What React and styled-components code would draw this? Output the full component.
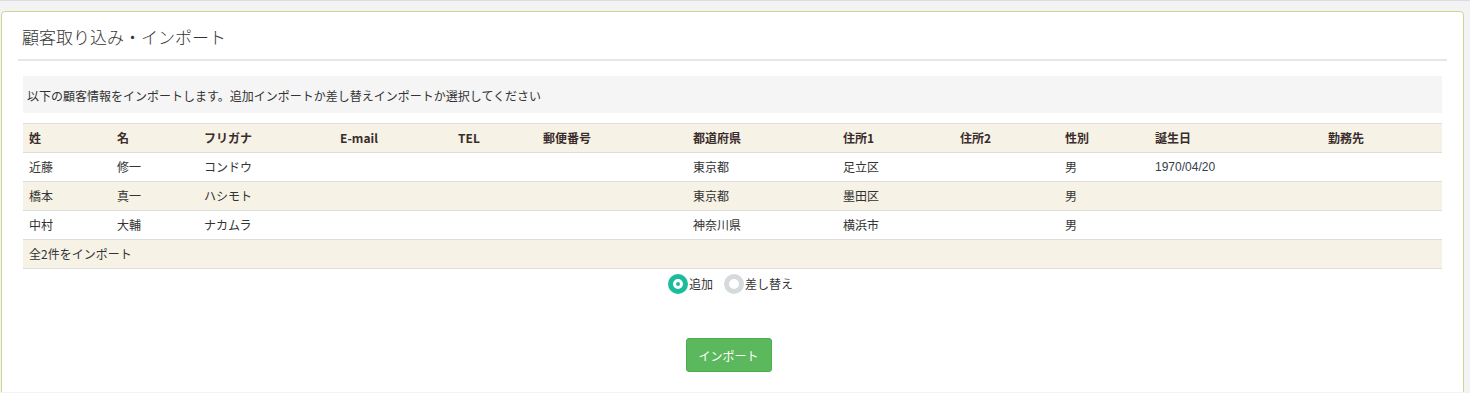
import styled, { createGlobalStyle } from "styled-components";

const GlobalStyle = createGlobalStyle`
    html, body {
        margin: 0;
        padding: 0;
        background: #f3f3f3;
    }
    body {
        font-family: "Noto Sans CJK JP", "Liberation Sans", sans-serif;
        font-size: 12px;
        color: #333;
    }
`;

const columns = [
    { key: "sei", label: "姓", width: 88 },
    { key: "mei", label: "名", width: 87 },
    { key: "kana", label: "フリガナ", width: 136 },
    { key: "mail", label: "E-mail", width: 118 },
    { key: "tel", label: "TEL", width: 85 },
    { key: "zip", label: "郵便番号", width: 150 },
    { key: "pref", label: "都道府県", width: 150 },
    { key: "addr1", label: "住所1", width: 117 },
    { key: "addr2", label: "住所2", width: 105 },
    { key: "sex", label: "性別", width: 90 },
    { key: "birth", label: "誕生日", width: 173 },
    { key: "office", label: "勤務先" },
];

const rows = [
    { sei: "近藤", mei: "修一", kana: "コンドウ", pref: "東京都", addr1: "足立区", sex: "男", birth: "1970/04/20" },
    { sei: "橋本", mei: "真一", kana: "ハシモト", pref: "東京都", addr1: "墨田区", sex: "男" },
    { sei: "中村", mei: "大輔", kana: "ナカムラ", pref: "神奈川県", addr1: "横浜市", sex: "男" },
];

const App = () => {
    return (
        <Page>
            <GlobalStyle />
            <Panel>
                <Heading>顧客取り込み・インポート</Heading>

                <Body>
                    <Notice>
                        以下の顧客情報をインポートします。追加インポートか差し替えインポートか選択してください
                    </Notice>

                    <Table>
                        <colgroup>
                            {columns.map(col => (
                                <col key={col.key} style={col.width ? { width: col.width } : undefined} />
                            ))}
                        </colgroup>
                        <thead>
                            <Row striped>
                                {columns.map(col => (
                                    <HeadCell key={col.key}>{col.label}</HeadCell>
                                ))}
                            </Row>
                        </thead>
                        <tbody>
                            {rows.map((row, i) => (
                                <Row key={i} striped={i % 2 === 1}>
                                    {columns.map(col => (
                                        <Cell key={col.key} latin={col.key === "birth"}>
                                            {row[col.key] || ""}
                                        </Cell>
                                    ))}
                                </Row>
                            ))}
                            <Row striped>
                                <Cell colSpan={columns.length}>全2件をインポート</Cell>
                            </Row>
                        </tbody>
                    </Table>

                    <RadioGroup>
                        <RadioLabel>
                            <Radio checked />
                            追加
                        </RadioLabel>
                        <RadioLabel>
                            <Radio />
                            差し替え
                        </RadioLabel>
                    </RadioGroup>

                    <Actions>
                        <Button>インポート</Button>
                    </Actions>
                </Body>
            </Panel>
        </Page>
    );
};

export default App;

const Page = styled.div`
    border-top: 1px solid #d9dee4;
    padding: 10px 6px 0 1px;
    height: 392px;
    overflow: hidden;
    box-sizing: border-box;
`;

const Panel = styled.div`
    background: #fff;
    border: 1px solid #cbd98f;
    border-radius: 4px;
    padding: 0 16px 30px;
    min-height: 400px;
`;

const Heading = styled.div`
    font-size: 17px;
    font-weight: 300;
    line-height: 24px;
    padding: 13px 4px 10px;
    border-bottom: 2px solid #e3e7eb;
    color: #333;
`;

const Body = styled.div`
    padding: 15px 5px 0;
`;

const Notice = styled.div`
    background: #f5f5f5;
    height: 37px;
    display: flex;
    align-items: center;
    padding: 1px 4px 0;
    font-size: 12px;
    box-sizing: border-box;
`;

const Table = styled.table`
    width: 100%;
    margin-top: 10px;
    border-collapse: collapse;
    table-layout: fixed;
    border-top: 1px solid #dddddd;
`;

const Row = styled.tr`
    background: ${props => (props.striped ? "#f6f2e6" : "#ffffff")};
    border-bottom: 1px solid #dddddd;
`;

const HeadCell = styled.th`
    text-align: left;
    font-weight: 700;
    font-size: 12px;
    line-height: 14px;
    padding: 7px 6px;
    color: #3a2c2c;
    white-space: nowrap;
`;

const Cell = styled.td`
    font-size: 12px;
    line-height: 14px;
    padding: 7px 6px;
    color: ${props => (props.latin ? "#36414c" : "#333")};
    font-family: ${props => (props.latin ? '"Liberation Sans", sans-serif' : "inherit")};
    white-space: nowrap;
`;

const RadioGroup = styled.div`
    display: flex;
    justify-content: center;
    gap: 11px;
    margin-top: 5px;
    padding-right: 4px;
`;

const RadioLabel = styled.label`
    display: flex;
    align-items: center;
    font-size: 12px;
    line-height: 20px;
    color: #333;
`;

const Radio = styled.span`
    width: 20px;
    height: 20px;
    border-radius: 50%;
    box-sizing: border-box;
    border: 5px solid ${props => (props.checked ? "#1abc9c" : "#d5dadd")};
    background: #fff;
    display: inline-block;
    margin-right: 1px;
    position: relative;

    &::after {
        content: "";
        display: ${props => (props.checked ? "block" : "none")};
        position: absolute;
        left: 50%;
        top: 50%;
        width: 4px;
        height: 4px;
        margin: -2px 0 0 -2px;
        border-radius: 50%;
        background: #1abc9c;
    }
`;

const Actions = styled.div`
    display: flex;
    justify-content: center;
    margin-top: 44px;
    padding-right: 8px;
`;

const Button = styled.button`
    font-family: "Noto Sans CJK JP", "Liberation Sans", sans-serif;
    font-size: 12px;
    color: #fff;
    background: #5cb85c;
    border: 1px solid #4cae4c;
    border-radius: 3px;
    width: 86px;
    height: 34px;
    padding: 0;
    cursor: pointer;
`;
